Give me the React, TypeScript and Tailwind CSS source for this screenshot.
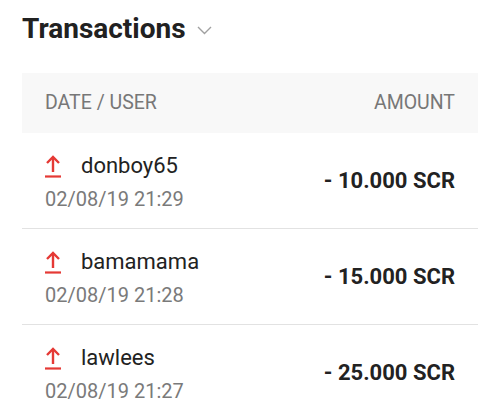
const transactions = [
  { user: "donboy65", date: "02/08/19 21:29", amount: "- 10.000 SCR" },
  { user: "bamamama", date: "02/08/19 21:28", amount: "- 15.000 SCR" },
  { user: "lawlees", date: "02/08/19 21:27", amount: "- 25.000 SCR" },
];

function UploadArrow() {
  return (
    <svg width="16" height="24" viewBox="0 0 16 24" fill="none" aria-hidden="true">
      <path d="M8 18V3" stroke="#e53935" strokeWidth="2.4" />
      <path d="M2 9l6-6 6 6" stroke="#e53935" strokeWidth="2.4" />
      <path d="M0 22.5h16" stroke="#e53935" strokeWidth="2.2" />
    </svg>
  );
}

export default function App() {
  return (
    <div className="min-h-screen bg-white font-['Roboto',sans-serif]">
      <div className="mx-[22px] pt-[12px]">
        <div className="flex items-center h-[34px]">
          <h1 className="text-[28px] leading-[34px] font-bold text-[#212121]">
            Transactions
          </h1>
          <svg className="ml-[11px] mt-[2px]" width="15" height="9" viewBox="0 0 15 9" fill="none">
            <path d="M1 1l6.5 6.5L14 1" stroke="#a0a0a0" strokeWidth="1.4" />
          </svg>
        </div>

        <div className="mt-[27px] h-[60px] bg-[#f8f8f8] px-[23px] flex items-center justify-between text-[19.5px] text-[#777]">
          <span>DATE / USER</span>
          <span>AMOUNT</span>
        </div>

        {transactions.map((t) => (
          <div
            key={t.user}
            className="h-[96px] border-b border-[#e2e2e2] px-[23px] flex items-center justify-between"
          >
            <div className="flex flex-col mt-[4px]">
              <div className="flex items-center gap-[20px] h-[32px]">
                <UploadArrow />
                <span className="text-[22px] text-[#222]">{t.user}</span>
              </div>
              <span className="text-[20px] leading-[34px] text-[#7a7a7a]">{t.date}</span>
            </div>
            <span className="text-[22px] font-bold text-[#222]">{t.amount}</span>
          </div>
        ))}
      </div>
    </div>
  );
}
